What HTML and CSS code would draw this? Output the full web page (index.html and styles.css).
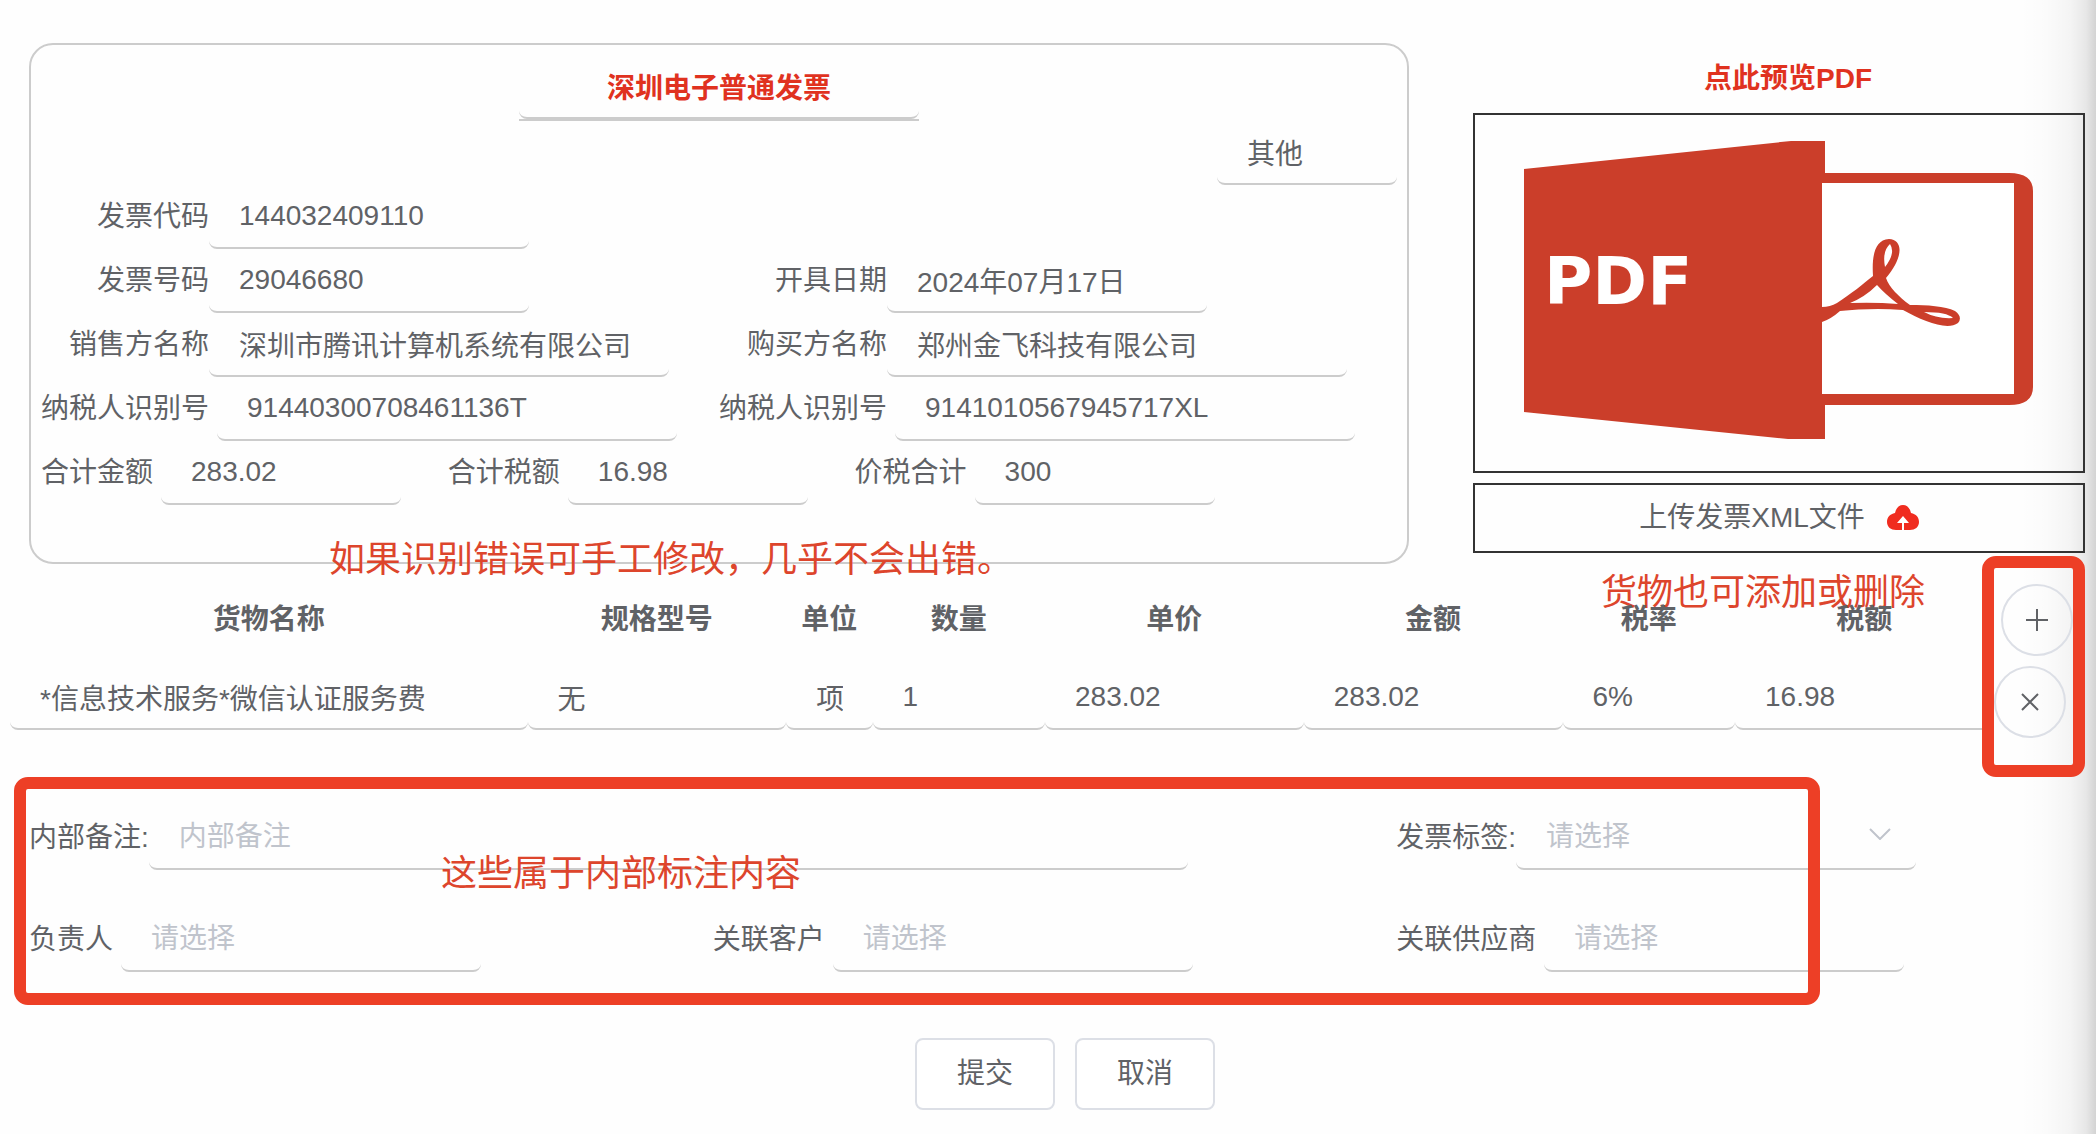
FILE: index.html
```html
<!DOCTYPE html>
<html lang="zh-CN">
<head>
<meta charset="utf-8">
<title>发票录入</title>
<link rel="stylesheet" href="styles.css">
</head>
<body>
<form class="page">
  <div class="top">
    <section class="card">
      <div class="card-title"><input class="field" aria-label="发票名称" value="深圳电子普通发票"></div>
      <div class="card-kind"><input class="field w-kind" aria-label="发票类别" value="其他"></div>
      <div class="pair">
        <div class="item"><label for="code">发票代码</label><input class="field w-short" id="code" value="144032409110"></div>
      </div>
      <div class="pair">
        <div class="item"><label for="number">发票号码</label><input class="field w-short" id="number" value="29046680"></div>
        <div class="item"><label for="date">开具日期</label><input class="field w-short" id="date" value="2024年07月17日"></div>
      </div>
      <div class="pair">
        <div class="item"><label for="seller">销售方名称</label><input class="field w-long" id="seller" value="深圳市腾讯计算机系统有限公司"></div>
        <div class="item"><label for="buyer">购买方名称</label><input class="field w-long" id="buyer" value="郑州金飞科技有限公司"></div>
      </div>
      <div class="pair">
        <div class="item spaced"><label for="seller-tax">纳税人识别号</label><input class="field w-long" id="seller-tax" value="91440300708461136T"></div>
        <div class="item spaced"><label for="buyer-tax">纳税人识别号</label><input class="field w-long" id="buyer-tax" value="9141010567945717XL"></div>
      </div>
      <div class="sums">
        <div class="sum"><label for="amount">合计金额</label><input class="field w-sum" id="amount" value="283.02"></div>
        <div class="sum"><label for="tax">合计税额</label><input class="field w-sum" id="tax" value="16.98"></div>
        <div class="sum"><label for="total">价税合计</label><input class="field w-sum" id="total" value="300"></div>
      </div>
      <p class="note note-card">如果识别错误可手工修改，几乎不会出错。</p>
    </section>

    <aside class="side">
      <a class="preview-link" href="#preview">点此预览PDF</a>
      <div class="preview" id="preview">
        <svg class="pdf" viewBox="0 0 608 356" role="img" aria-label="PDF">
          <path fill="#cb3e2a" d="M49 54 316 26H350V58H534Q558 58 558 76V272Q558 290 534 290H350V324H313L49 297Z"/>
          <path fill="#fff" d="M347 68H539V279H347Z"/>
          <path fill="#cb3e2a" d="M347 192Q355 192 362 188C376 179 388 169 398 161C397 145 398 125 414 124C429 125 428 143 411 163C414 172 424 182 435 190C452 190 470 191 480 196Q488 202 483 208C472 216 448 206 428 195C406 193 384 194 365 196Q356 204 347 207Z"/>
          <path fill="#fff" d="M402 170Q390 182 375 188Q400 187 423 189Q410 179 402 170ZM415 129Q407 136 410 152Q421 138 415 129ZM449 197Q462 204 478 203Q472 197 449 197Z"/>
          <text class="pdf-word" x="69" y="189">PDF</text>
        </svg>
      </div>
      <button class="upload" type="button">上传发票XML文件
        <svg class="cloud" viewBox="0 0 32 26" aria-hidden="true">
          <path fill="#f02c1f" d="M8 8C9 3 12 0 16 0S23 3 24 8C29 9 32 12 32 17S28 25 23 25H9C4 25 0 22 0 17S3 9 8 8Z"/>
          <path fill="#fff" d="M16 11 22 18H17V25H15V18H10Z"/>
        </svg>
      </button>
      <p class="note note-goods">货物也可添加或删除</p>
    </aside>
  </div>

  <div class="goods">
    <table class="goods-table">
      <colgroup><col class="c6"><col class="c3"><col class="c1"><col class="c2"><col class="c3"><col class="c3"><col class="c2"><col class="c3"><col class="c1"></colgroup>
      <thead>
        <tr>
          <th>货物名称</th><th>规格型号</th><th>单位</th><th>数量</th><th>单价</th><th>金额</th><th>税率</th><th>税额</th>
          <th><button class="round" type="button" aria-label="添加"><svg viewBox="0 0 24 24" aria-hidden="true"><path d="M12 1V23M1 12H23"/></svg></button></th>
        </tr>
      </thead>
      <tbody>
        <tr>
          <td><input class="field" aria-label="货物名称" value="*信息技术服务*微信认证服务费"></td>
          <td><input class="field" aria-label="规格型号" value="无"></td>
          <td><input class="field" aria-label="单位" value="项"></td>
          <td><input class="field" aria-label="数量" value="1"></td>
          <td><input class="field" aria-label="单价" value="283.02"></td>
          <td><input class="field" aria-label="金额" value="283.02"></td>
          <td><input class="field" aria-label="税率" value="6%"></td>
          <td><input class="field" aria-label="税额" value="16.98"></td>
          <td><button class="round" type="button" aria-label="删除"><svg viewBox="0 0 24 24" aria-hidden="true"><path d="M4 4 20 20M20 4 4 20"/></svg></button></td>
        </tr>
      </tbody>
    </table>
    <div class="frame frame-actions"></div>
  </div>

  <section class="internal">
    <div class="cell wide"><label for="remark">内部备注:</label><input class="field w-remark" id="remark" placeholder="内部备注"></div>
    <div class="cell">
      <label for="tag">发票标签:</label>
      <span class="select-box">
        <select class="field" id="tag"><option>请选择</option></select>
        <svg class="chevron" viewBox="0 0 22 12" aria-hidden="true"><path d="M1 1 11 11 21 1"/></svg>
      </span>
    </div>
    <div class="cell spaced"><label for="owner">负责人</label><input class="field w-pick" id="owner" placeholder="请选择"></div>
    <div class="cell spaced"><label for="customer">关联客户</label><input class="field w-pick" id="customer" placeholder="请选择"></div>
    <div class="cell spaced"><label for="supplier">关联供应商</label><input class="field w-pick" id="supplier" placeholder="请选择"></div>
    <div class="frame frame-internal"></div>
    <p class="note note-internal">这些属于内部标注内容</p>
  </section>

  <div class="buttons">
    <button class="btn" type="submit">提交</button>
    <button class="btn" type="button">取消</button>
  </div>
</form>
</body>
</html>
```
FILE: styles.css
```css
* { box-sizing: border-box; }

body {
  margin: 0;
  min-height: 100vh;
  color: #606266;
  font: 28px/40px "Liberation Sans", "Noto Sans CJK SC", sans-serif;
  background: #fefefe;
}

/* page, with the soft shade along the right edge of the window */
.page {
  min-height: 100vh;
  padding: 43px 0 22px;
  background: linear-gradient(to left, rgba(0, 0, 0, .17), rgba(0, 0, 0, .09) 10px, rgba(0, 0, 0, .04) 26px, rgba(0, 0, 0, .01) 50px, rgba(0, 0, 0, 0) 76px);
}

input, select, button { font: inherit; color: inherit; }
p { margin: 0; }
label { white-space: nowrap; }

.field {
  display: block;
  width: 100%;
  height: 64px;
  padding: 0 30px;
  border: 0;
  border-bottom: 2px solid #ccc;
  border-radius: 8px;
  background: transparent;
  outline: 0;
}
.field::placeholder { color: #c0c4cc; opacity: 1; }
.w-kind { width: 180px; }
.w-short { width: 320px; }
.w-long { width: 460px; }
.w-sum { width: 240px; }
.w-pick { width: 360px; }
.w-remark { width: 76%; }

.top {
  display: grid;
  grid-template-columns: 1380fr 612fr;
  gap: 64px;
  padding: 0 11px 0 29px;
}

/* invoice card */
.card {
  position: relative;
  padding: 10px 10px 57px;
  border: 2px solid #ccc;
  border-radius: 24px;
}
.card-title {
  width: 400px;
  margin: 0 auto;
  border-bottom: 2px solid #ccc;
}
.card-title .field {
  text-align: center;
  font-weight: bold;
  color: #e0321f;
}
.card-kind { display: flex; justify-content: flex-end; }
.pair { display: grid; grid-template-columns: 1fr 1fr; }
.item { display: flex; align-items: center; }
.item label { width: 168px; text-align: right; }
.sums { display: grid; grid-template-columns: 30% 30% 30%; }
.sum { display: flex; align-items: center; gap: 8px; }
.spaced { gap: 8px; }

/* preview and upload */
.side {
  position: relative;
  display: flex;
  flex-direction: column;
}
.preview-link {
  height: 70px;
  padding-left: 18px;
  line-height: 72px;
  text-align: center;
  font-weight: bold;
  color: #e0321f;
  text-decoration: none;
}
.preview { border: 2px solid #333; }
.pdf { display: block; width: 100%; }
.pdf-word { font: bold 66px "DejaVu Sans", sans-serif; fill: #fff; }
.upload {
  display: flex;
  align-items: center;
  justify-content: center;
  gap: 22px;
  height: 70px;
  margin-top: 10px;
  border: 2px solid #333;
  background: transparent;
}
.cloud { width: 32px; height: 26px; }

/* goods table */
.goods { position: relative; margin-top: 20px; padding: 0 16px 0 10px; }
.goods-table { width: 100%; table-layout: fixed; border-collapse: collapse; }
.c1 { width: calc(100% / 24); }
.c2 { width: calc(100% / 12); }
.c3 { width: calc(100% / 8); }
.c6 { width: 25%; }
.goods-table th { height: 72px; padding: 0; text-align: center; }
.goods-table td { padding: 10px 0 0; vertical-align: top; }
.round {
  display: flex;
  align-items: center;
  justify-content: center;
  width: 72px;
  height: 72px;
  padding: 0;
  border: 2px solid #dcdfe6;
  border-radius: 50%;
  background: transparent;
}
.goods-table th .round { margin: 0 auto; }
.round svg { width: 24px; height: 24px; fill: none; stroke: #606266; stroke-width: 2; }

/* internal fields */
.internal {
  position: relative;
  display: grid;
  grid-template-columns: 1fr 1fr 1fr;
  row-gap: 38px;
  margin: 68px 16px 0 29px;
}
.cell { display: flex; align-items: center; }
.wide { grid-column: span 2; }
.select-box { position: relative; width: 400px; }
.select-box select { appearance: none; color: #c0c4cc; }
.chevron {
  position: absolute;
  right: 25px;
  top: 22px;
  width: 22px;
  height: 12px;
  fill: none;
  stroke: #c0c4cc;
  stroke-width: 2;
}

.buttons {
  display: flex;
  justify-content: center;
  gap: 20px;
  margin-top: 66px;
  padding-left: 34px;
}
.btn {
  width: 140px;
  height: 72px;
  border: 2px solid #dcdfe6;
  border-radius: 8px;
  background: #fff;
}

/* red marks drawn over the form */
.note {
  position: absolute;
  font-size: 36px;
  line-height: 48px;
  white-space: nowrap;
  color: #dd452c;
  pointer-events: none;
}
.note-card { left: 298px; bottom: -22px; }
.note-goods { left: 128px; bottom: -53px; }
.note-internal { left: 412px; top: 44px; }
.frame {
  position: absolute;
  border: 12px solid #ed3f26;
  border-radius: 14px;
  pointer-events: none;
}
.frame-actions { right: 11px; top: -28px; width: 103px; height: 221px; }
.frame-internal { left: -15px; right: 260px; top: -29px; bottom: -33px; }
```
